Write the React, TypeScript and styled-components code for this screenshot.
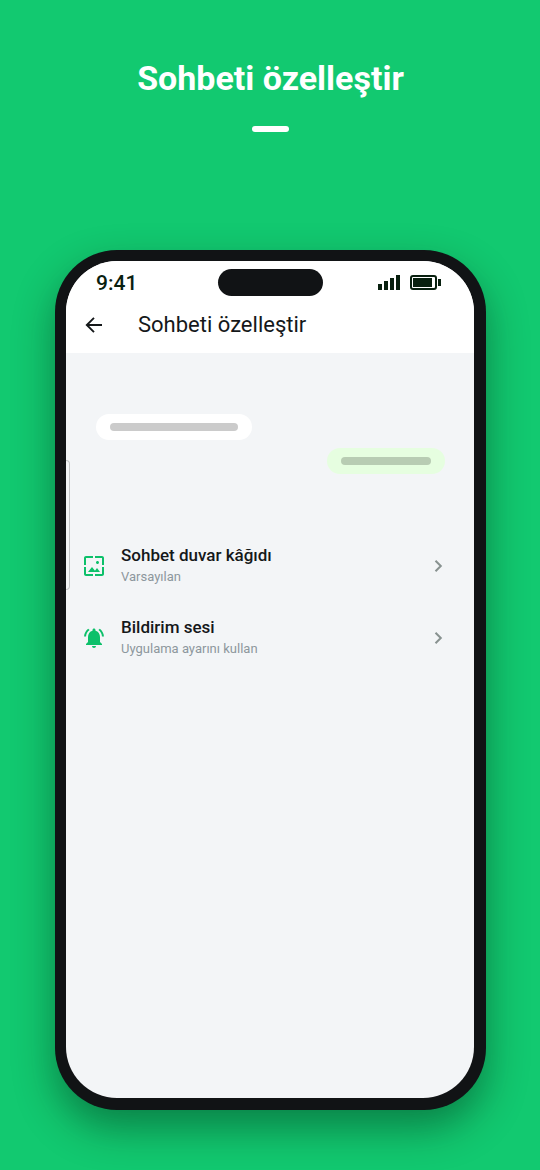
import React from "react";
import styled, { createGlobalStyle } from "styled-components";

const GlobalStyle = createGlobalStyle`
  *, *::before, *::after { box-sizing: border-box; }
  body { margin: 0; background: #12c970; font-family: Roboto, "Liberation Sans", sans-serif; }
  button { font: inherit; color: inherit; background: none; border: 0; margin: 0; padding: 0; cursor: pointer; }
  svg { display: block; flex: none; }
`;

const Page = styled.main`
  min-height: 100vh;
  display: flex;
  flex-direction: column;
  align-items: stretch;
  padding: 58px 54px 60px 55px;
`;

const Headline = styled.h1`
  margin: 0;
  font-size: 34px;
  line-height: 40px;
  font-weight: 700;
  color: #fff;
  text-align: center;
`;

const Dash = styled.div`
  width: 37px;
  height: 6px;
  margin: 28px auto 118px;
  border-radius: 3px;
  background: #fff;
`;

const Phone = styled.section`
  flex: 1;
  display: flex;
  flex-direction: column;
  padding: 11px 12px 12px 11px;
  border-radius: 62px;
  background: #111315;
  box-shadow: 0 18px 40px rgba(0, 36, 18, 0.44);
`;

const Screen = styled.div`
  position: relative;
  flex: 1;
  display: flex;
  flex-direction: column;
  border-radius: 51px;
  overflow: hidden;
  background: #f3f5f7;
`;

const StatusBar = styled.div`
  display: grid;
  grid-template-columns: 1fr 105px 1fr;
  align-items: center;
  height: 43px;
  background: #fff;
  color: #08200f;
`;

const Clock = styled.time`
  padding-left: 30px;
  font-size: 21px;
  line-height: 24px;
  font-weight: 500;
`;

const Island = styled.div`
  height: 27px;
  border-radius: 14px;
  background: #111315;
`;

const StatusIcons = styled.div`
  display: flex;
  justify-content: flex-end;
  gap: 10px;
  padding-right: 33px;
`;

const TopBar = styled.header`
  display: flex;
  align-items: center;
  gap: 34px;
  height: 49px;
  padding: 0 18px 8px;
  background: #fff;
  color: #15181a;
`;

const Title = styled.h2`
  margin: 0;
  font-size: 22px;
  line-height: 28px;
  font-weight: 400;
`;

const Preview = styled.div`
  display: flex;
  flex-direction: column;
  gap: 8px;
  padding: 61px 29px 60px 30px;
`;

const Bubble = styled.div<{ $sent?: boolean }>`
  align-self: ${(p) => (p.$sent ? "flex-end" : "flex-start")};
  width: ${(p) => (p.$sent ? 118 : 156)}px;
  padding: 9px 14px;
  border-radius: 13px;
  background: ${(p) => (p.$sent ? "#e6fee0" : "#fff")};
`;

const BubbleLine = styled.div<{ $sent?: boolean }>`
  height: 8px;
  border-radius: 4px;
  background: ${(p) => (p.$sent ? "#b8ccb3" : "#cbcbcb")};
`;

const Settings = styled.nav`
  display: flex;
  flex-direction: column;
`;

const SettingRow = styled.button`
  display: flex;
  align-items: center;
  gap: 15px;
  height: 72px;
  padding: 0 24px 8px 16px;
  text-align: left;
`;

const SettingText = styled.span`
  flex: 1;
  display: flex;
  flex-direction: column;
  gap: 2px;
  padding-bottom: 4px;
`;

const SettingName = styled.span`
  font-size: 17px;
  line-height: 24px;
  font-weight: 500;
  color: #15181a;
`;

const SettingValue = styled.span`
  font-size: 13px;
  line-height: 16px;
  color: #8d979d;
`;

const EdgeHandle = styled.div`
  position: absolute;
  left: 0;
  top: 199px;
  width: 4px;
  height: 130px;
  border: 1px solid #c3c5c7;
  border-left: 0;
  border-radius: 0 4px 4px 0;
`;

const SignalIcon = () => (
  <svg width="22" height="15" viewBox="0 0 22 15" fill="currentColor" aria-hidden="true">
    <path d="M0 9h4v6H0zM6 6h4v9H6zM12 3h4v12h-4zM18 0h4v15h-4z" />
  </svg>
);

const BatteryIcon = () => (
  <svg width="31" height="15" viewBox="0 0 31 15" fill="currentColor" aria-hidden="true">
    <rect x="1" y="1" width="25" height="13" rx="2" fill="none" stroke="currentColor" strokeWidth="2" />
    <path d="M3 3h19v9H3zM28 4h3v7h-3z" />
  </svg>
);

const BackIcon = () => (
  <svg width="20" height="20" viewBox="0 0 20 20" fill="none" stroke="currentColor" strokeWidth="1.9" aria-hidden="true">
    <path d="M18 10H3M10 2.8L2.8 10l7.2 7.2" />
  </svg>
);

const WallpaperIcon = () => (
  <svg width="24" height="24" viewBox="0 0 24 24" fill="#0cc06a" aria-hidden="true">
    <path d="M4 4h7V2H4c-1.1 0-2 .9-2 2v7h2V4zm6 9-4 5h12l-3-4-2.03 2.71L10 13zm7-4.500c0-.83-.67-1.500-1.500-1.500S14 7.670 14 8.500s.67 1.500 1.500 1.500S17 9.330 17 8.500zM20 2h-7v2h7v7h2V4c0-1.100-.9-2-2-2zm0 18h-7v2h7c1.100 0 2-.9 2-2v-7h-2v7zM4 13H2v7c0 1.100.9 2 2 2h7v-2H4v-7z" />
  </svg>
);

const BellIcon = () => (
  <svg width="24" height="24" viewBox="0 0 24 24" fill="#0cc06a" aria-hidden="true">
    <path d="M7.580 4.080L6.150 2.650C3.750 4.480 2.170 7.300 2.030 10.500h2c.15-2.650 1.510-4.970 3.550-6.420zM19.970 10.500h2c-.15-3.200-1.730-6.020-4.120-7.850l-1.420 1.430c2.020 1.450 3.390 3.770 3.540 6.420zM18 11c0-3.070-1.640-5.640-4.500-6.320V4c0-.83-.67-1.500-1.500-1.500s-1.500.67-1.500 1.500v.68C7.630 5.360 6 7.920 6 11v5l-2 2v1h16v-1l-2-2v-5zM12 22c1.100 0 2-.9 2-2h-4c0 1.100.9 2 2 2z" />
  </svg>
);

const ChevronIcon = () => (
  <svg width="24" height="24" viewBox="0 0 24 24" fill="none" stroke="#889290" strokeWidth="2" aria-hidden="true">
    <path d="M9.500 6.700L14.800 12l-5.300 5.300" />
  </svg>
);

const settings = [
  { name: "Sohbet duvar kâğıdı", value: "Varsayılan", Icon: WallpaperIcon },
  { name: "Bildirim sesi", value: "Uygulama ayarını kullan", Icon: BellIcon },
];

export default function App() {
  return (
    <>
      <GlobalStyle />
      <Page lang="tr">
        <Headline>Sohbeti özelleştir</Headline>
        <Dash />
        <Phone>
          <Screen>
            <StatusBar>
              <Clock>9:41</Clock>
              <Island />
              <StatusIcons>
                <SignalIcon />
                <BatteryIcon />
              </StatusIcons>
            </StatusBar>
            <TopBar>
              <button type="button" aria-label="Geri">
                <BackIcon />
              </button>
              <Title>Sohbeti özelleştir</Title>
            </TopBar>
            <Preview>
              <Bubble>
                <BubbleLine />
              </Bubble>
              <Bubble $sent>
                <BubbleLine $sent />
              </Bubble>
            </Preview>
            <Settings>
              {settings.map(({ name, value, Icon }) => (
                <SettingRow type="button" key={name}>
                  <Icon />
                  <SettingText>
                    <SettingName>{name}</SettingName>
                    <SettingValue>{value}</SettingValue>
                  </SettingText>
                  <ChevronIcon />
                </SettingRow>
              ))}
            </Settings>
            <EdgeHandle />
          </Screen>
        </Phone>
      </Page>
    </>
  );
}
